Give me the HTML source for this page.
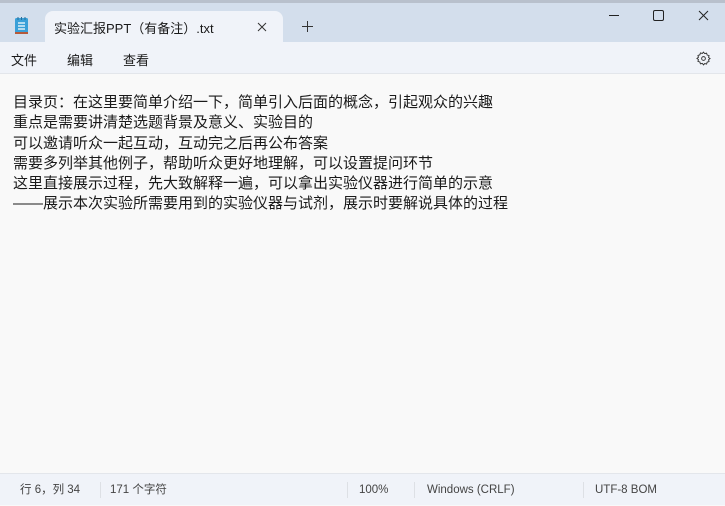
<!DOCTYPE html>
<html><head><meta charset="utf-8"><style>
*{margin:0;padding:0;box-sizing:border-box}
body{width:725px;height:505px;overflow:hidden;background:#f9f9f9;font-family:"Liberation Sans","Noto Sans CJK SC",sans-serif;color:#1a1a1a;position:relative}
.title{position:absolute;left:0;top:0;width:725px;height:42px;background:#d3deec}
.strip{position:absolute;left:0;top:0;width:725px;height:3px;background:#b8c0cc}
.tab{position:absolute;left:45px;top:11px;width:238px;height:32px;background:#f0f3f9;border-radius:8px 8px 0 0}
.tab span{position:absolute;left:9px;top:7px;font-size:13px}
.menu{position:absolute;left:0;top:42px;width:725px;height:32px;background:#f0f3f9;border-bottom:1px solid #e3e6eb}
.menu span{position:absolute;top:8px;font-size:13px}
.text{position:absolute;left:13px;top:93px;font-size:15px;line-height:20.3px;white-space:pre}
.status{position:absolute;left:0;top:473px;width:725px;height:32px;background:#f0f3f9;border-top:1px solid #e3e6eb;font-size:11.5px;color:#444}
.status span{position:absolute;top:0;line-height:32px}
.sep{position:absolute;top:8px;width:1px;height:16px;background:#dde0e5}
</style></head><body>
<div class="title"></div><div class="strip"></div>
<svg style="position:absolute;left:14px;top:16px" width="16" height="20" viewBox="0 0 16 20"><rect x="1" y="2" width="13" height="16" rx="1.5" fill="#3aa0d8"/><rect x="1" y="16" width="13" height="2" fill="#b55a3a"/><path d="M4 7h7M4 10h7M4 13h7" stroke="#fff" stroke-width="1.2"/><path d="M4 1v3M7.5 1v3M11 1v3" stroke="#2a6f9a" stroke-width="1"/></svg>
<div class="tab"><span>实验汇报PPT（有备注）.txt</span>
<svg style="position:absolute;left:212px;top:11px" width="10" height="10"><path d="M1 1L9 9M9 1L1 9" stroke="#333" stroke-width="1"/></svg></div>
<svg style="position:absolute;left:302px;top:21px" width="11" height="11"><path d="M5.5 0v11M0 5.5h11" stroke="#333" stroke-width="1"/></svg>
<svg style="position:absolute;left:608px;top:10px" width="110" height="12"><path d="M1 5.5h10" stroke="#222"/><rect x="45.5" y="0.5" width="10" height="10" rx="1.5" fill="none" stroke="#222"/><path d="M91 1l9 9M100 1l-9 9" stroke="#222"/></svg>
<div class="menu"><span style="left:11px">文件</span><span style="left:67px">编辑</span><span style="left:123px">查看</span>
<svg style="position:absolute;left:696px;top:9px" width="15" height="15" viewBox="0 0 16 16"><path d="M8 1.2l1.3 1.6 2-.5.6 2 2 .6-.5 2L15 8l-1.6 1.3.5 2-2 .6-.6 2-2-.5L8 14.8l-1.3-1.6-2 .5-.6-2-2-.6.5-2L1 8l1.6-1.3-.5-2 2-.6.6-2 2 .5z" fill="none" stroke="#333" stroke-width="1"/><circle cx="8" cy="8" r="2" fill="none" stroke="#333"/></svg></div>
<div class="text">目录页：在这里要简单介绍一下，简单引入后面的概念，引起观众的兴趣
重点是需要讲清楚选题背景及意义、实验目的
可以邀请听众一起互动，互动完之后再公布答案
需要多列举其他例子，帮助听众更好地理解，可以设置提问环节
这里直接展示过程，先大致解释一遍，可以拿出实验仪器进行简单的示意
——展示本次实验所需要用到的实验仪器与试剂，展示时要解说具体的过程</div>
<div class="status"><span style="left:20px">行 6，列 34</span><div class="sep" style="left:100px"></div><span style="left:110px">171 个字符</span>
<div class="sep" style="left:347px"></div><span style="left:359px">100%</span><div class="sep" style="left:414px"></div><span style="left:427px">Windows (CRLF)</span><div class="sep" style="left:583px"></div><span style="left:595px">UTF-8 BOM</span></div>
</body></html>
